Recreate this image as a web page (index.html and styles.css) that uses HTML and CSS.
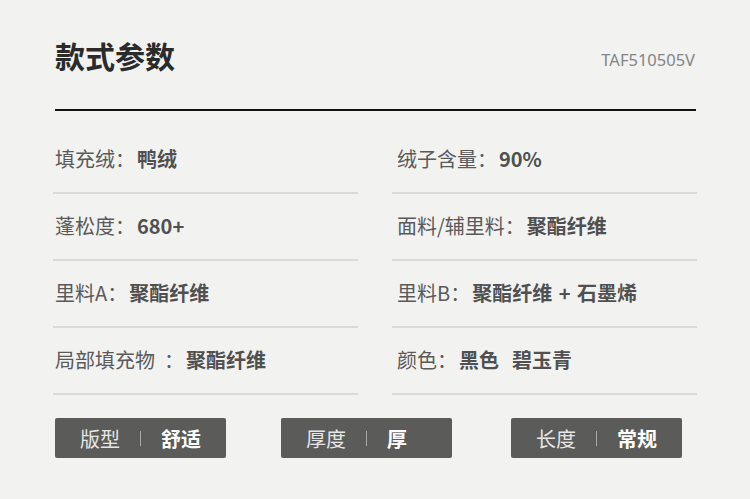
FILE: index.html
```html
<!DOCTYPE html>
<html lang="zh-CN">
<head>
<meta charset="utf-8">
<title>款式参数</title>
<link rel="stylesheet" href="styles.css">
</head>
<body>
<div class="page">
  <header class="head">
    <h1 class="title">款式参数</h1>
    <span class="code">TAF510505V</span>
  </header>
  <div class="rule"></div>
  <div class="specs">
    <div class="cell left"><span class="lbl">填充绒：</span><span class="val">鸭绒</span></div>
    <div class="cell right"><span class="lbl">绒子含量：</span><span class="val">90%</span></div>
    <div class="cell left"><span class="lbl">蓬松度：</span><span class="val">680+</span></div>
    <div class="cell right"><span class="lbl">面料/辅里料：</span><span class="val">聚酯纤维</span></div>
    <div class="cell left"><span class="lbl">里料A：</span><span class="val">聚酯纤维</span></div>
    <div class="cell right"><span class="lbl">里料B：</span><span class="val">聚酯纤维 + 石墨烯</span></div>
    <div class="cell left"><span class="lbl">局部填充物&nbsp;&nbsp;：</span><span class="val">聚酯纤维</span></div>
    <div class="cell right"><span class="lbl">颜色：</span><span class="val">黑色&nbsp;&nbsp;碧玉青</span></div>
  </div>
  <div class="tags">
    <div class="tag"><span class="tk">版型</span><span class="sep"></span><span class="tv">舒适</span></div>
    <div class="tag"><span class="tk">厚度</span><span class="sep"></span><span class="tv">厚</span></div>
    <div class="tag"><span class="tk">长度</span><span class="sep"></span><span class="tv">常规</span></div>
  </div>
</div>
</body>
</html>
```

FILE: styles.css
```css
* { box-sizing: border-box; }
html, body {
  margin: 0;
  padding: 0;
  background: #f2f2f1;
}
body {
  font-family: "Noto Sans CJK SC", "Noto Sans", sans-serif;
  width: 750px;
  height: 499px;
  overflow: hidden;
}
.page {
  padding: 36px 0 0 55px;
  width: 697px;
}
.head {
  display: flex;
  justify-content: space-between;
  align-items: center;
  height: 38px;
}
.title {
  margin: 0;
  font-size: 30px;
  font-weight: 700;
  color: #2b2b2b;
  line-height: 38px;
}
.code {
  font-family: "Noto Sans", sans-serif;
  font-size: 16.5px;
  color: #858585;
  margin-top: 8px;
  margin-right: 2px;
}
.rule {
  margin-top: 35px;
  height: 2px;
  background: #111;
  width: 641px;
}
.specs {
  margin-top: 16px;
  margin-left: -2px;
  display: grid;
  grid-template-columns: 305px 305px;
  column-gap: 34px;
}
.cell {
  height: 67px;
  display: flex;
  align-items: center;
  padding-bottom: 2px;
  border-bottom: 2px solid #dadad9;
  font-size: 20px;
  white-space: nowrap;
}
.cell.left { padding-left: 2px; }
.cell.right { padding-left: 5px; }
.lbl {
  color: #5a5a5a;
  font-weight: 400;
}
.val {
  margin-left: 2px;
  color: #505050;
  font-weight: 700;
  word-spacing: 2px;
}
.tags {
  margin-top: 23px;
  display: flex;
  gap: 55px;
}
.tag:last-child { margin-left: 4px; }
.tag {
  width: 171px;
  height: 40px;
  background: #5b5b5a;
  border-radius: 2px;
  display: grid;
  grid-template-columns: 1fr auto 1fr;
  align-items: center;
  column-gap: 20px;
  color: #fff;
  font-size: 20px;
}
.tk {
  justify-self: end;
  color: #e6e6e6;
  font-weight: 400;
}
.tv {
  justify-self: start;
  font-weight: 700;
  color: #fff;
}
.sep {
  width: 1px;
  height: 15px;
  background: #a8a8a8;
}
```
